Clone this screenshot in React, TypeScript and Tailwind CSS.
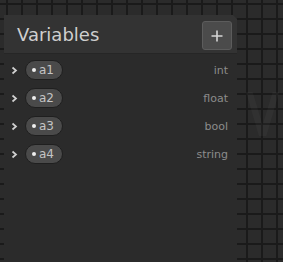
import React from "react";

const rows = [
  { name: "a1", type: "int" },
  { name: "a2", type: "float" },
  { name: "a3", type: "bool" },
  { name: "a4", type: "string" },
];

export default function App() {
  return (
    <div
      className="relative w-[283px] h-[262px] overflow-hidden bg-[#2b2b2b] bg-[linear-gradient(to_right,#1a1a1a_2px,transparent_2px),linear-gradient(to_bottom,#1a1a1a_2px,transparent_2px)] bg-[size:15px_15px] bg-[position:6px_3px] pt-[15px] pl-[4px]"
      style={{ fontFamily: '"DejaVu Sans", sans-serif' }}
    >
      <div
        aria-hidden="true"
        className="absolute left-[246px] top-[92px] w-[37px] h-[44px] bg-[rgba(255,255,255,0.03)] [clip-path:polygon(0_0,18%_0,45%_75%,72%_0,90%_0,55%_100%,35%_100%)]"
      />
      <div className="relative flex flex-col w-[233px] h-[247px] bg-[#2b2b2b] rounded-tl-[3px] [clip-path:polygon(0_0,calc(100%-4px)_0,100%_4px,100%_100%,0_100%)]">
        <div className="flex items-center justify-between h-[39px] bg-[#333333] border-b border-[#262626] pl-[13px] pr-[5px]">
          <span className="text-[18px] leading-none text-[#cfcfcf] mt-[1px]">Variables</span>
          <button className="flex items-center justify-center w-[30px] h-[29px] mt-[3px] rounded-[3px] bg-[#4b4b4b] border border-[#5c5c5c]">
            <svg width="12" height="12" viewBox="0 0 12 12">
              <path d="M6 0.5V11.5M0.5 6H11.5" stroke="#d6d6d6" strokeWidth="1.6" />
            </svg>
          </button>
        </div>
        <div className="flex flex-col pt-[2px]">
          {rows.map((r) => (
            <div key={r.name} className="flex items-center h-[28px] pl-[7px] pr-[9px]">
              <svg width="7" height="9" viewBox="0 0 7 9" className="mr-[7px]">
                <path d="M1.5 1.5L5 4.5L1.5 7.5" stroke="#d0d0d0" strokeWidth="1.7" fill="none" />
              </svg>
              <div className="flex items-center w-[38px] h-[20px] rounded-full bg-[#4a4a4a] border border-[#1f1f1f] pl-[6px]">
                <span className="w-[4px] h-[4px] rounded-full bg-[#eeeeee] mr-[3px]" />
                <span className="text-[12px] leading-none text-[#c4c4c4]">{r.name}</span>
              </div>
              <span className="ml-auto text-[11px] leading-none text-[#8c8c8c]">{r.type}</span>
            </div>
          ))}
        </div>
      </div>
    </div>
  );
}
